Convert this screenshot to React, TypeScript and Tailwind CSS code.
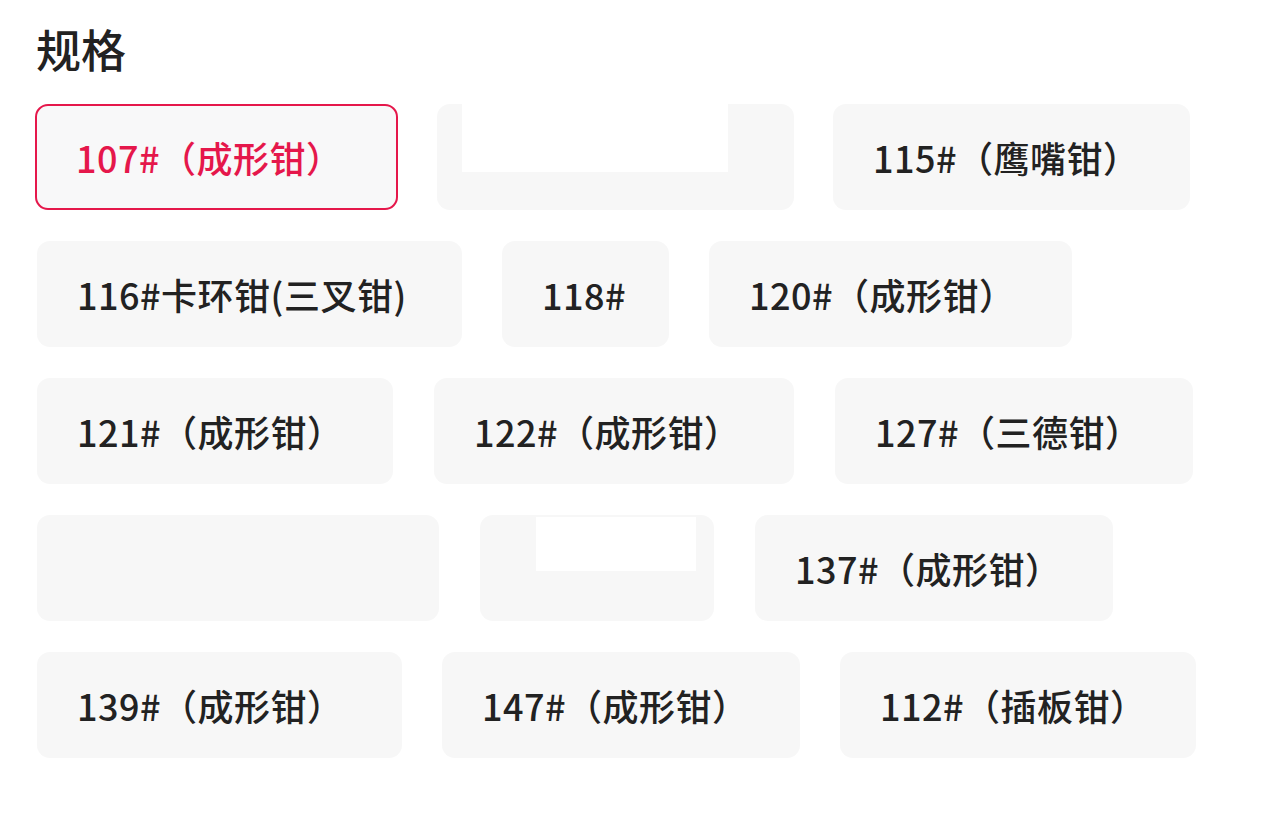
import React, { useState } from 'react';

interface Spec {
  id: string;
  label: string;
  width: string;
  patch?: string;
}

interface Row {
  gap: string;
  items: Spec[];
}

const rows: Row[] = [
  {
    gap: 'gap-[39px]',
    items: [
      { id: '107', label: '107#（成形钳）', width: 'w-[363px] -ml-[2px]' },
      { id: 'blank-1', label: '', width: 'w-[357px]', patch: 'ml-[25px] mb-[38px] h-[68px] w-[266px]' },
      { id: '115', label: '115#（鹰嘴钳）', width: 'w-[357px]' },
    ],
  },
  {
    gap: 'gap-[40px]',
    items: [
      { id: '116', label: '116#卡环钳(三叉钳)', width: 'w-[425px]' },
      { id: '118', label: '118#', width: 'w-[167px]' },
      { id: '120', label: '120#（成形钳）', width: 'w-[363px]' },
    ],
  },
  {
    gap: 'gap-[41px]',
    items: [
      { id: '121', label: '121#（成形钳）', width: 'w-[356px]' },
      { id: '122', label: '122#（成形钳）', width: 'w-[360px]' },
      { id: '127', label: '127#（三德钳）', width: 'w-[358px]' },
    ],
  },
  {
    gap: 'gap-[41px]',
    items: [
      { id: 'blank-2', label: '', width: 'w-[402px]' },
      { id: 'blank-3', label: '', width: 'w-[234px]', patch: 'ml-[56px] mt-[2px] h-[54px] w-[160px]' },
      { id: '137', label: '137#（成形钳）', width: 'w-[358px]' },
    ],
  },
  {
    gap: 'gap-[40px]',
    items: [
      { id: '139', label: '139#（成形钳）', width: 'w-[365px]' },
      { id: '147', label: '147#（成形钳）', width: 'w-[358px]' },
      { id: '112', label: '112#（插板钳）', width: 'w-[356px]' },
    ],
  },
];

const App: React.FC = () => {
  const [selected, setSelected] = useState('107');

  return (
    <div
      className="w-[1280px] h-[815px] bg-white pl-[37px] pt-[22px] text-[#222222]"
      style={{ fontFamily: '"Noto Sans CJK SC", "Noto Sans", sans-serif' }}
    >
      <h2 className="-ml-[1px] text-[45px] leading-[54px] font-medium">规格</h2>

      <div className="mt-[28px] flex flex-col gap-[31px]">
        {rows.map((row, i) => (
          <div key={i} className={`flex ${row.gap}`}>
            {row.items.map((spec) => {
              const active = spec.id === selected;
              return (
                <button
                  key={spec.id}
                  onClick={() => spec.label && setSelected(spec.id)}
                  className={`${spec.width} h-[106px] shrink-0 flex rounded-[13px] text-[36px] font-medium tracking-[0.5px] whitespace-nowrap text-left ${
                    active
                      ? 'bg-[#f8f8f9] border-2 border-[#e5174b] text-[#e5174b] pl-[39px]'
                      : 'bg-[#f7f7f7] text-[#222222] pl-[40px]'
                  } ${spec.patch ? 'items-start !pl-0' : 'items-center'}`}
                >
                  {spec.patch ? <span className={`${spec.patch} bg-white block`} /> : spec.label}
                </button>
              );
            })}
          </div>
        ))}
      </div>
    </div>
  );
};

export default App;
